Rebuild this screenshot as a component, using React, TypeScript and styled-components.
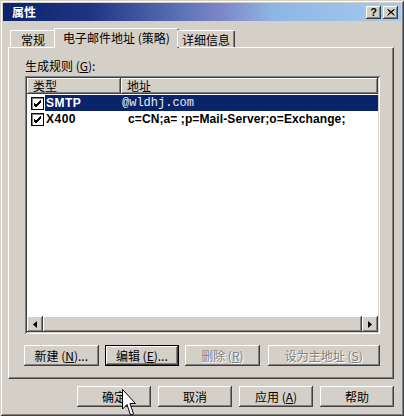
import styled, { createGlobalStyle } from 'styled-components';

const GlobalStyle = createGlobalStyle`
  html, body {
    margin: 0;
    padding: 0;
    background: #d4d0c8;
  }
  body {
    font-family: "Noto Sans CJK SC", "Liberation Sans", sans-serif;
    font-size: 12px;
    color: #000;
  }
`;

const raised = `
  box-shadow: inset -1px -1px #404040, inset 1px 1px #fff, inset -2px -2px #808080, inset 2px 2px #d4d0c8;
`;

const sunken = `
  box-shadow: inset 1px 1px #808080, inset -1px -1px #fff, inset 2px 2px #404040, inset -2px -2px #d4d0c8;
`;

const Window = styled.div`
  position: relative;
  width: 404px;
  height: 416px;
  box-sizing: border-box;
  padding: 3px;
  background: #d4d0c8;
  box-shadow: inset 1px 1px #d4d0c8, inset -1px -1px #404040, inset 2px 2px #fff, inset -2px -2px #808080;
  display: flex;
  flex-direction: column;
  overflow: hidden;
`;

const TitleBar = styled.div`
  height: 18px;
  display: flex;
  align-items: center;
  padding: 0 3px 0 9px;
  background: linear-gradient(90deg, #0a246a 0%, #1e3585 22%, #5b74b6 45%, #7f86c8 55%, #8db6e4 68%, #a6caf0 100%);
`;

const Title = styled.span`
  flex: 1;
  color: #fff;
  font-weight: bold;
  font-size: 12px;
  line-height: 18px;
`;

const CaptionButton = styled.div`
  width: 15px;
  height: 13px;
  margin-left: 1px;
  background: #d4d0c8;
  ${raised}
  display: flex;
  align-items: center;
  justify-content: center;
  font: bold 11px "Liberation Sans", sans-serif;
`;

const TabStrip = styled.div`
  display: flex;
  align-items: flex-end;
  height: 20px;
  margin: 6px 0 0 7px;
  position: relative;
  z-index: 1;
`;

const Tab = styled.div<{ $w: number; $active?: boolean }>`
  width: ${(p) => p.$w}px;
  height: ${(p) => (p.$active ? 20 : 17)}px;
  margin: ${(p) => (p.$active ? '0 -2px -1px -2px' : '0')};
  box-sizing: border-box;
  display: flex;
  align-items: center;
  justify-content: center;
  background: #d4d0c8;
  border-top: 1px solid #fff;
  border-left: 1px solid #fff;
  border-right: 1px solid #404040;
  box-shadow: inset -1px 0 #808080;
  border-radius: 2px 2px 0 0;
  padding-bottom: ${(p) => (p.$active ? 3 : 0)}px;
  white-space: nowrap;
`;

const Panel = styled.div`
  margin: 0 7px 0 5px;
  height: 332px;
  box-sizing: border-box;
  padding: 10px 13px 0 16px;
  background: #d4d0c8;
  border-top: 1px solid #fff;
  border-left: 1px solid #fff;
  border-right: 1px solid #404040;
  border-bottom: 1px solid #404040;
  box-shadow: inset -1px -1px #808080;
  display: flex;
  flex-direction: column;
`;

const Label = styled.div`
  line-height: 16px;
  height: 16px;
  margin-bottom: 2px;
`;

const ListView = styled.div`
  height: 258px;
  box-sizing: border-box;
  padding: 2px;
  background: #fff;
  ${sunken}
  display: flex;
  flex-direction: column;
`;

const HeaderRow = styled.div`
  display: flex;
  height: 16px;
`;

const HeaderCell = styled.div<{ $w?: number }>`
  ${(p) => (p.$w ? `width: ${p.$w}px;` : 'flex: 1;')}
  box-sizing: border-box;
  padding-left: 6px;
  line-height: 15px;
  background: #d4d0c8;
  ${raised}
`;

const Rows = styled.div`
  flex: 1;
  padding-top: 1px;
`;

const Row = styled.div`
  display: flex;
  align-items: center;
  height: 16px;
`;

const Check = styled.div`
  width: 13px;
  height: 13px;
  box-sizing: border-box;
  margin: 0 1px 0 4px;
  background: #fff;
  border: 1px solid #000;
  box-shadow: inset 1px 1px #808080;
  display: flex;
  align-items: center;
  justify-content: center;
`;

const Item = styled.div<{ $selected?: boolean }>`
  flex: 1;
  display: flex;
  height: 16px;
  align-items: center;
  background: ${(p) => (p.$selected ? '#0a246a' : 'transparent')};
  color: ${(p) => (p.$selected ? '#fff' : '#000')};
`;

const Name = styled.span`
  width: 76px;
  padding-left: 1px;
  font: bold 12px "Liberation Sans", sans-serif;
  letter-spacing: 0.5px;
`;

const Address = styled.span<{ $mono?: boolean }>`
  padding-left: ${(p) => (p.$mono ? 0 : 6)}px;
  white-space: nowrap;
  font: ${(p) => (p.$mono ? '12px "Liberation Mono", monospace' : 'bold 12px "Liberation Sans", sans-serif')};
  letter-spacing: ${(p) => (p.$mono ? 0 : 0.1)}px;
  color: ${(p) => (p.$mono ? '#e8eaf2' : 'inherit')};
`;

const HScroll = styled.div`
  height: 16px;
  display: flex;
  background: repeating-conic-gradient(#fff 0 25%, #d4d0c8 0 50%) 0 0 / 2px 2px;
`;

const ScrollButton = styled.div`
  width: 16px;
  height: 16px;
  box-sizing: border-box;
  background: #d4d0c8;
  ${raised}
  display: flex;
  align-items: center;
  justify-content: center;
`;

const Thumb = styled.div`
  flex: 1;
  background: #d4d0c8;
  ${raised}
`;

const ButtonRow = styled.div`
  display: flex;
  gap: 6px;
  margin-top: 11px;
  margin-left: -1px;
`;

const Button = styled.div<{ $w: number; $disabled?: boolean; $focused?: boolean }>`
  width: ${(p) => p.$w}px;
  height: 21px;
  box-sizing: border-box;
  display: flex;
  align-items: center;
  justify-content: center;
  background: #d4d0c8;
  white-space: pre;
  color: ${(p) => (p.$disabled ? '#808080' : '#000')};
  text-shadow: ${(p) => (p.$disabled ? '1px 1px #fff' : 'none')};
  ${(p) =>
    p.$focused
      ? 'border: 1px solid #000; box-shadow: inset -1px -1px #404040, inset 1px 1px #fff, inset -2px -2px #808080;'
      : raised}
  u {
    text-decoration: underline;
  }
`;

const Footer = styled.div`
  display: flex;
  justify-content: flex-end;
  gap: 7px;
  margin: 7px 7px 0 0;
`;

const Cursor = styled.svg`
  position: absolute;
  left: 122px;
  top: 389px;
`;

const CheckMark = () => (
  <svg width="9" height="9" viewBox="0 0 9 9">
    <path d="M1 4 L3 6 L8 1 M1 5 L3 7 L8 2 M1 6 L3 8 L8 3" stroke="#000" strokeWidth="1" fill="none" />
  </svg>
);

export default function App() {
  return (
    <>
      <GlobalStyle />
      <Window>
        <TitleBar>
          <Title>属性</Title>
          <CaptionButton>?</CaptionButton>
          <CaptionButton style={{ marginLeft: 2 }}>
            <svg width="8" height="7" viewBox="0 0 8 7">
              <path d="M0.5 0.5 L7.5 6.5 M1.5 0.5 L7 5.5 M7.5 0.5 L0.5 6.5 M6.5 0.5 L1 5.5" stroke="#000" fill="none" />
            </svg>
          </CaptionButton>
        </TitleBar>

        <TabStrip>
          <Tab $w={46}>常规</Tab>
          <Tab $w={125} $active>
            电子邮件地址 (策略)
          </Tab>
          <Tab $w={58}>详细信息</Tab>
        </TabStrip>

        <Panel>
          <Label>
            生成规则 (<u>G</u>):
          </Label>
          <ListView>
            <HeaderRow>
              <HeaderCell $w={94}>类型</HeaderCell>
              <HeaderCell>地址</HeaderCell>
            </HeaderRow>
            <Rows>
              <Row>
                <Check>
                  <CheckMark />
                </Check>
                <Item $selected>
                  <Name>SMTP</Name>
                  <Address $mono>@wldhj.com</Address>
                </Item>
              </Row>
              <Row>
                <Check>
                  <CheckMark />
                </Check>
                <Item>
                  <Name>X400</Name>
                  <Address>c=CN;a= ;p=Mail-Server;o=Exchange;</Address>
                </Item>
              </Row>
            </Rows>
            <HScroll>
              <ScrollButton>
                <svg width="4" height="7" viewBox="0 0 4 7">
                  <path d="M4 0 L0 3.5 L4 7 Z" fill="#000" />
                </svg>
              </ScrollButton>
              <Thumb />
              <ScrollButton>
                <svg width="4" height="7" viewBox="0 0 4 7">
                  <path d="M0 0 L4 3.5 L0 7 Z" fill="#000" />
                </svg>
              </ScrollButton>
            </HScroll>
          </ListView>
          <ButtonRow>
            <Button $w={75}>
              新建 (<u>N</u>)...
            </Button>
            <Button $w={75} $focused>
              编辑 (<u>E</u>)...
            </Button>
            <Button $w={75} $disabled>
              删除 (<u>R</u>)
            </Button>
            <Button $w={113} $disabled style={{ marginLeft: 2 }}>
              设为主地址 (<u>S</u>)
            </Button>
          </ButtonRow>
        </Panel>

        <Footer>
          <Button $w={74}>确定</Button>
          <Button $w={74}>取消</Button>
          <Button $w={74}>
            应用 (<u>A</u>)
          </Button>
          <Button $w={74}>帮助</Button>
        </Footer>

        <Cursor width="14" height="28" viewBox="0 0 14 28">
          <path d="M0.5 0.5 L0.5 20 L5 15.5 L8.5 26 L11.5 25 L8 14.5 L13.5 14.5 Z" fill="#fff" stroke="#000" />
        </Cursor>
      </Window>
    </>
  );
}
